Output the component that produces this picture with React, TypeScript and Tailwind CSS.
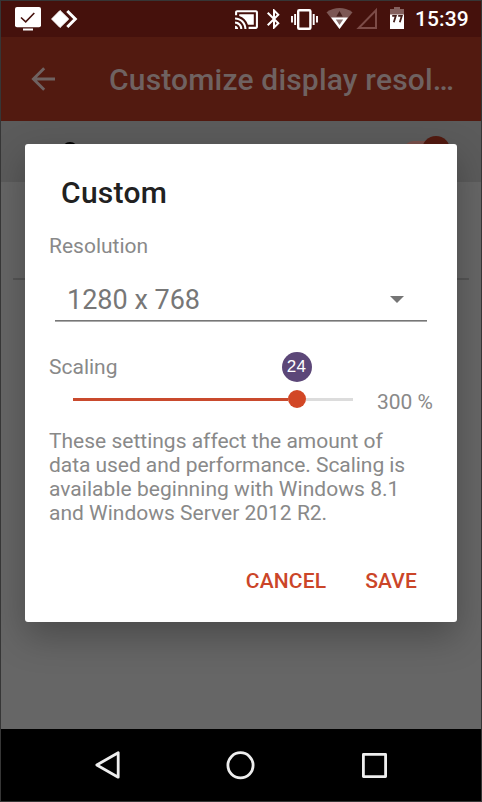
import React from "react";

function StatusBar() {
  return (
    <header className="flex h-9 shrink-0 items-start bg-[#45110c] pl-[14px] pr-[12px] text-white">
      <svg className="h-9 w-[26px]" viewBox="15 1 26 36" fill="none">
        <rect x="15" y="7" width="26" height="20.3" rx="2" fill="#fff" />
        <path d="M23 29.5h10" stroke="#fff" strokeWidth="2" />
        <path d="M21 17.5l4.7 4.3L34.3 13" stroke="#45110c" strokeWidth="1.6" />
      </svg>
      <svg className="ml-[10px] h-9 w-[27px]" viewBox="51 1 27 36" fill="none">
        <path d="M60 10.5l8.7 8.5L60 27.5 51.6 19z" fill="#fff" stroke="#fff" strokeLinejoin="round" />
        <path d="M67.3 11l8 8-8 8" stroke="#fff" strokeWidth="3" />
      </svg>
      <div className="flex-1" />
      <svg className="mt-[6px] size-[25px]" viewBox="0 0 24 24" fill="#fff">
        <path d="M1 18v3h3c0-1.66-1.34-3-3-3zm0-4v2c2.76 0 5 2.24 5 5h2c0-3.87-3.13-7-7-7zm18-7H5v1.63c3.96 1.28 7.09 4.41 8.37 8.37H19V7zM1 10v2c4.97 0 9 4.03 9 9h2c0-6.08-4.93-11-11-11zm20-7H3c-1.1 0-2 .9-2 2v3h2V5h18v14h-7v2h7c1.1 0 2-.9 2-2V5c0-1.1-.9-2-2-2z" />
      </svg>
      <svg className="ml-[3px] mt-[6px] size-6" viewBox="0 0 24 24" fill="#fff">
        <path d="M17.71 7.71L12 2h-1v7.59L6.41 5 5 6.41 10.59 12 5 17.59 6.41 19 11 14.41V22h1l5.71-5.71-4.3-4.29 4.3-4.29zM13 5.83l1.88 1.88L13 9.59V5.83zm1.88 10.46L13 18.17v-3.76l1.88 1.88z" />
      </svg>
      <svg className="ml-1 h-9 w-7" viewBox="290 1 28 36" fill="none" stroke="#fff">
        <rect x="298.2" y="10.2" width="12.2" height="18.6" rx="1" strokeWidth="2.4" />
        <path d="M295.1 14v11M292 16v6.5M313.7 14v11M317 16v6.5" strokeWidth="1.9" />
      </svg>
      <svg className="ml-2 h-9 w-[27px]" viewBox="326 1 27 36">
        <path d="M326.5 12.3q13-8.4 26 0L339.5 29z" fill="#7c5754" />
        <path d="M331 17.5h17L339.5 29z" fill="#fff" />
        <path d="M339.5 11l3.2 5.5h-6.4z" fill="#45201c" />
        <path d="M335.8 19.5h7.4l-3.7 5.5z" fill="#8b7270" />
      </svg>
      <svg className="ml-[3px] h-9 w-[22px]" viewBox="356 1 22 36" fill="none">
        <path d="M376 10.2V28H358.7z" stroke="#7c4b47" strokeWidth="2" />
      </svg>
      <svg className="ml-3 h-9 w-[14px]" viewBox="390 1 14 36">
        <path d="M394 7h6v2h4v6h-14V9h4z" fill="#83605d" />
        <path d="M390 14.5h14V29h-14z" fill="#fff" />
        <path d="M392.2 15.8h3.6l-2 6.4M398.2 15.8h3.6l-2 6.4" fill="none" stroke="#45201c" strokeWidth="1.8" />
      </svg>
      <span className="ml-[11px] mt-[6px] w-[54px] whitespace-nowrap text-[21px] font-medium leading-6 tracking-[0.1px]">15:39</span>
    </header>
  );
}

function AppBar() {
  return (
    <div className="flex h-[84px] shrink-0 items-center bg-[#521a10] pl-[30px] text-[#6f6261]">
      <svg className="size-6" viewBox="0 0 24 24" fill="none" stroke="currentColor" strokeWidth="2.9">
        <path d="M13.2 1.2L2.4 12l10.8 10.8M2.4 12H24" />
      </svg>
      <h1 className="ml-[54px] mt-px whitespace-nowrap text-[30px] font-medium leading-9 tracking-[0.18px]">Customize display resol…</h1>
    </div>
  );
}

function Backdrop() {
  return (
    <main className="flex flex-1 flex-col bg-[#666]">
      <div className="flex h-[61px] justify-between bg-[#5b5b5b] pl-[61px] pr-[31px]">
        <div className="mt-[21px] size-4 rounded-full border-4 border-black" />
        <div className="mt-[15px] flex h-7 w-[46px] items-center">
          <div className="h-[18px] w-[32px] rounded-l-full bg-[#79504b]" />
          <div className="-ml-[14px] size-7 shrink-0 rounded-full bg-[#521a10]" />
        </div>
      </div>
      <div className="mx-3 mt-24 h-[2px] bg-[#555]" />
    </main>
  );
}

function Dialog() {
  return (
    <section className="absolute left-6 top-[143px] flex h-[478px] w-[432px] flex-col rounded-[3px] bg-white px-6 pt-[31px] text-[21px] leading-6 text-[#898989] shadow-[0_14px_36px_rgba(0,0,0,0.28)]">
      <h2 className="ml-3 text-[30px] font-medium leading-9 tracking-[0.3px] text-[#212121]">Custom</h2>
      <label className="mt-[23px]">Resolution</label>
      <div className="ml-[6px] mt-[26px] flex h-[37px] w-[372px] items-start justify-between border-b border-[#777] pl-3 pr-[23px] text-[27px] leading-8 text-[#777] shadow-[0_1px_0_#aaa]">
        <span>1280 x 768</span>
        <svg className="mt-3 h-[7px] w-[14px]" viewBox="0 0 14 7" fill="#757575">
          <path d="M0 0h14L7 7z" />
        </svg>
      </div>
      <div className="mt-[31px] flex h-[30px] items-center">
        <label className="w-[232.6px]">Scaling</label>
        <span className="flex size-[30px] items-center justify-center rounded-full bg-[#5c4778] font-['Liberation_Sans',sans-serif] text-[17px] leading-5 tracking-[0.4px] text-white">24</span>
      </div>
      <div className="mt-[7px] flex h-[25px] items-start">
        <div className="ml-6 mt-px flex h-[18px] w-[280px] items-center">
          <div className="h-[3px] w-[214.6px] bg-[#c94a2d]" />
          <div className="size-[18px] rounded-full bg-[#d24726]" />
          <div className="h-[3px] flex-1 bg-[#dcdcdc]" />
        </div>
        <span className="ml-6 mt-px whitespace-nowrap">300 %</span>
      </div>
      <p className="mt-[15px] whitespace-nowrap">
        These settings affect the amount of<br />
        <span className="tracking-[-0.05px]">data used and performance. Scaling is</span><br />
        <span className="tracking-[0.04px]">available beginning with Windows 8.1</span><br />
        and Windows Server 2012 R2.
      </p>
      <div className="mr-4 mt-11 flex justify-end gap-[39px] font-medium tracking-[0.15px] text-[#cb4528]">
        <button>CANCEL</button>
        <button>SAVE</button>
      </div>
    </section>
  );
}

function NavigationBar() {
  return (
    <nav className="flex h-[72px] shrink-0 items-center justify-between bg-black px-[92px]">
      <svg className="size-[30px]" viewBox="0 0 30 30" fill="none" stroke="#eee" strokeWidth="2.8" strokeLinejoin="round">
        <path d="M25.2 2.8v24.4L3.8 15z" />
      </svg>
      <svg className="size-[30px]" viewBox="0 0 30 30" fill="none" stroke="#eee" strokeWidth="2.8">
        <circle cx="14.5" cy="15.3" r="12.6" />
      </svg>
      <svg className="size-[30px]" viewBox="0 0 30 30" fill="none" stroke="#eee" strokeWidth="2.8" strokeLinejoin="round">
        <rect x="4.4" y="4.4" width="22.2" height="22.2" />
      </svg>
    </nav>
  );
}

export default function App() {
  return (
    <div className="relative flex h-[802px] w-[482px] flex-col overflow-hidden border border-[#363636] font-[Roboto,sans-serif]">
      <StatusBar />
      <AppBar />
      <Backdrop />
      <Dialog />
      <NavigationBar />
    </div>
  );
}
